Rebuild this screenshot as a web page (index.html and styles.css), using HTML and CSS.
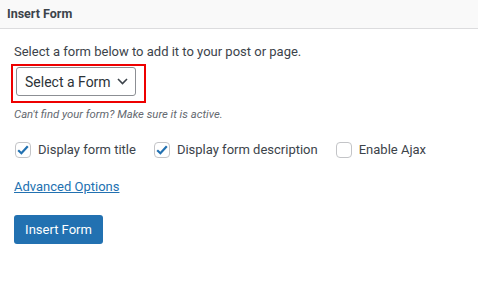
FILE: index.html
```html
<!DOCTYPE html>
<html lang="en">
<head>
  <meta charset="UTF-8" />
  <title>Insert Form</title>
  <link rel="stylesheet" href="styles.css">
</head>
<body>

  <div class="panel">
    <div class="panel-header">Insert Form</div>

    <div class="panel-body">
      <p class="intro">Select a form below to add it to your post or page.</p>

      <div class="select-highlight">
        <div class="form-select">
          <span>Select a Form</span>
          <svg class="chevron" width="11" height="7" viewBox="0 0 11 7">
            <path d="M1 1 L5.5 5.5 L10 1" fill="none" stroke="#3c434a" stroke-width="1.6"/>
          </svg>
        </div>
      </div>

      <p class="hint">Can't find your form? Make sure it is active.</p>

      <div class="options">
        <label class="check">
          <span class="box checked">
            <svg width="12" height="10" viewBox="0 0 12 10"><path d="M1.2 5.2 L4.4 8.2 L10.8 1.2" fill="none" stroke="#2271b1" stroke-width="2.2"/></svg>
          </span>
          Display form title
        </label>
        <label class="check">
          <span class="box checked">
            <svg width="12" height="10" viewBox="0 0 12 10"><path d="M1.2 5.2 L4.4 8.2 L10.8 1.2" fill="none" stroke="#2271b1" stroke-width="2.2"/></svg>
          </span>
          Display form description
        </label>
        <label class="check">
          <span class="box"></span>
          Enable Ajax
        </label>
      </div>

      <a class="advanced" href="#">Advanced Options</a>

      <button class="insert-btn">Insert Form</button>
    </div>
  </div>

</body>
</html>
```

FILE: styles.css
```css
/* Reset */
* {
  margin: 0;
  padding: 0;
  box-sizing: border-box;
}

body {
  background: #fff;
  font-family: Roboto, "Liberation Sans", Arial, sans-serif;
  color: #3c434a;
}

/* Header strip */
.panel-header {
  height: 29px;
  background: #f9f9f9;
  border-bottom: 1px solid #dcdcde;
  padding: 0 7px;
  font-size: 12.5px;
  font-weight: 700;
  line-height: 28px;
  color: #3c434a;
}

.panel-body {
  padding: 14px 14px;
  display: flex;
  flex-direction: column;
  align-items: flex-start;
}

.intro {
  font-size: 13px;
  line-height: 18px;
}

/* Red highlight around the dropdown */
.select-highlight {
  margin-top: 3px;
  margin-left: -3px;
  border: 2px solid #e00;
  padding: 1px 8px 5px 3px;
}

.form-select {
  width: 120px;
  height: 29px;
  border: 1px solid #8c8f94;
  border-radius: 3px;
  padding: 0 8px;
  display: flex;
  align-items: center;
  gap: 6px;
  white-space: nowrap;
  font-size: 14px;
  color: #2c3338;
}

.chevron {
  flex-shrink: 0;
}

.hint {
  margin-top: 3px;
  font-size: 11.3px;
  font-style: italic;
  line-height: 18px;
  color: #646970;
}

/* Checkbox row */
.options {
  margin-top: 17px;
  display: flex;
  gap: 18px;
  margin-left: 1px;
}

.check {
  display: flex;
  align-items: center;
  gap: 7px;
  font-size: 13px;
  line-height: 18px;
}

.box {
  width: 16px;
  height: 16px;
  border: 1px solid #c3c4c7;
  border-radius: 4px;
  display: flex;
  align-items: center;
  justify-content: center;
}

.advanced {
  margin-top: 19px;
  font-size: 13px;
  line-height: 18px;
  color: #2271b1;
}

.insert-btn {
  margin-top: 19px;
  width: 89px;
  height: 29px;
  background: #2271b1;
  color: #fff;
  border: none;
  border-radius: 3px;
  font-family: inherit;
  font-size: 13px;
}
```
